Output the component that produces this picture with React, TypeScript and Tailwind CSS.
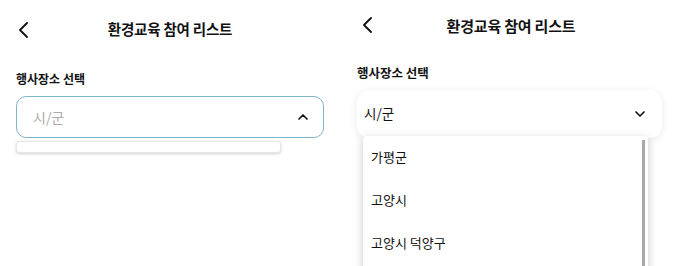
import { ChevronUp, ChevronDown } from "lucide-react";

const font = { fontFamily: '"Noto Sans CJK KR", "Noto Sans", sans-serif' };

function BackArrow({ className }: { className: string }) {
  return (
    <svg className={className} width="9" height="16" viewBox="0 0 9 16" fill="none">
      <polyline points="8,1 1,8 8,15" stroke="#111" strokeWidth="1.8" strokeLinecap="round" strokeLinejoin="round" />
    </svg>
  );
}

export default function App() {
  return (
    <div className="flex w-[680px] h-[266px] overflow-hidden bg-white text-[#111]" style={font}>
      {/* left: opened, empty list */}
      <div className="w-[340px] h-full shrink-0">
        <div className="relative h-[58px] flex items-center justify-center">
          <BackArrow className="absolute left-[19px] top-[22px]" />
          <h1 className="text-[14.5px] font-semibold tracking-[-0.2px]">환경교육 참여 리스트</h1>
        </div>
        <div className="px-4 pt-[15px]">
          <div className="text-[12px] font-semibold leading-none">행사장소 선택</div>
          <div className="mt-[11px] h-[42px] w-[308px] rounded-[10px] border border-[#82b4c9] flex items-center justify-between pl-4 pr-[12px]">
            <span className="text-[14px] text-[#ababab]">시/군</span>
            <ChevronUp className="w-[16px] h-[16px]" strokeWidth={2.5} />
          </div>
          <div className="mt-[3px] h-[12px] w-[265px] rounded-[3px] border border-[#e6e6e6] bg-white shadow-[0_1px_3px_rgba(0,0,0,0.18)]" />
        </div>
      </div>

      {/* right: dropdown open with items */}
      <div className="w-[340px] h-full shrink-0">
        <div className="relative h-[52px] flex items-center justify-center">
          <BackArrow className="absolute left-[23px] top-[17px]" />
          <h1 className="text-[15px] font-semibold tracking-[-0.2px] pl-[2px]">환경교육 참여 리스트</h1>
        </div>
        <div className="pl-[17px] pr-[18px] pt-[15px]">
          <div className="text-[12.5px] font-semibold leading-none">행사장소 선택</div>
          <div className="mt-[10px] h-[48px] w-[305px] rounded-[12px] bg-white shadow-[0_2px_8px_rgba(0,0,0,0.09)] flex items-center justify-between pl-[7px] pr-[14px]">
            <span className="text-[13.5px]">시/군</span>
            <ChevronDown className="w-[16px] h-[16px]" strokeWidth={2.5} />
          </div>
          <div className="relative -mt-[2px] ml-[6px] w-[285px] h-[140px] rounded-[4px] bg-white shadow-[0_3px_10px_rgba(0,0,0,0.22)]">
            <div className="absolute right-[3px] top-[4px] bottom-0 w-[3px] bg-[#a9a9a9]" />
            <ul className="text-[13px]">
              <li className="h-[43px] flex items-center pl-[8px]">가평군</li>
              <li className="h-[43px] flex items-center pl-[8px]">고양시</li>
              <li className="h-[43px] flex items-center pl-[8px]">고양시 덕양구</li>
            </ul>
          </div>
        </div>
      </div>
    </div>
  );
}
